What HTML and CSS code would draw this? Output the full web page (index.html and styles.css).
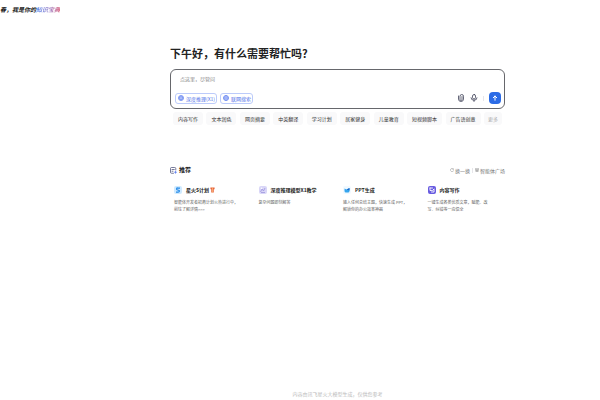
FILE: index.html
```html
<!DOCTYPE html>
<html lang="zh-CN">
<head>
<meta charset="UTF-8" />
<title>知识宝典</title>
<meta name="viewport" content="width=device-width, initial-scale=1" />
<link rel="stylesheet" href="styles.css">
</head>
<body>

<header class="topbar">春，我是你的<span class="brand">知识宝典</span></header>

<main class="main">
  <h1>下午好，有什么需要帮忙吗?</h1>

  <form class="ask">
    <input type="text" class="ask-input" placeholder="点这里，尽管问" aria-label="提问">
    <div class="ask-bar">
      <button type="button" class="mode">
        <svg viewBox="0 0 12 12"><circle cx="6" cy="6" r="5" fill="#dbe3ff" stroke="#5577ee" stroke-width="1.5"/><path d="M6 2.5L9 4.3v3.4L6 9.5 3 7.7V4.3zM3 4.3l3 1.7 3-1.7M6 6v3.5" fill="none" stroke="#5577ee"/></svg>
        深度推理(X1)
      </button>
      <button type="button" class="mode">
        <svg viewBox="0 0 12 12"><circle cx="6" cy="6" r="5" fill="#dbe3ff" stroke="#5577ee" stroke-width="1.5"/><path d="M1 6h10M6 1c-3 3-3 7 0 10M6 1c3 3 3 7 0 10" fill="none" stroke="#5577ee"/></svg>
        联网搜索
      </button>
      <div class="tools">
        <button type="button" class="tool" aria-label="附件">
          <svg viewBox="0 0 16 16" fill="none" stroke="#33364d" stroke-width="1.5" stroke-linecap="round"><path d="M10 5v6a2 2 0 0 1-4 0V4.500a3.500 3.500 0 0 1 7 0V10a5 5 0 0 1-10 0V4"/></svg>
        </button>
        <button type="button" class="tool" aria-label="语音">
          <svg viewBox="0 0 16 16" fill="none" stroke="#33364d" stroke-width="1.5" stroke-linecap="round"><rect x="5" y="1" width="6" height="9" rx="3"/><path d="M2 7.500a6 5 0 0 0 12 0M8 12.500V15"/></svg>
        </button>
        <span class="line"></span>
        <button type="submit" class="send" aria-label="发送">
          <svg viewBox="0 0 12 12" fill="none" stroke="#fff" stroke-width="2" stroke-linecap="round" stroke-linejoin="round"><path d="M6 10.500V2M2.500 5.500L6 2l3.500 3.500"/></svg>
        </button>
      </div>
    </div>
  </form>

  <div class="chips">
    <button type="button">内容写作</button>
    <button type="button">文本润色</button>
    <button type="button">网页摘要</button>
    <button type="button">中英翻译</button>
    <button type="button">学习计划</button>
    <button type="button">居家健身</button>
    <button type="button">儿童教育</button>
    <button type="button">短视频脚本</button>
    <button type="button">广告语创意</button>
    <button type="button" class="more">更多</button>
  </div>

  <section class="recommend">
    <div class="rec-head">
      <svg class="rec-icon" viewBox="0 0 14 14" fill="none" stroke="#4a4f78" stroke-width="1.5" stroke-linecap="round"><path d="M11.500 6V3a2 2 0 0 0-2-2H3a2 2 0 0 0-2 2v7.500a2 2 0 0 0 2 2h4M4 5h4.500M4 8.500h2"/><path d="M11 8.500v4M9 10.500h4" stroke="#5577ee"/></svg>
      <h2>推荐</h2>
      <div class="rec-links">
        <a href="#"><svg viewBox="0 0 10 10" fill="none" stroke="#888" stroke-width="1.200"><path d="M8.500 3A4 4 0 1 0 9 6M8.500 1v2.500H6"/></svg>换一换</a>
        <span class="line"></span>
        <a href="#"><svg viewBox="0 0 10 10" fill="none" stroke="#888" stroke-width="1.200"><path d="M1 1h8v3H1zM2 4v5h6V4M5 4v5M2 6.500h6"/></svg>智能体广场</a>
      </div>
    </div>

    <div class="cards">
      <article class="card">
        <h3>
          <svg viewBox="0 0 16 16"><rect width="16" height="16" rx="4" fill="#cfeaff"/><path d="M12 4H7.500a2 2 0 0 0-.500 4l2.500.500A1.800 1.800 0 0 1 9 12H4" fill="none" stroke="#2389e8" stroke-width="2.500"/></svg>
          <span>星火S计划<svg class="gift" viewBox="0 0 12 14"><path d="M1 1h10v4H1zM3 5h6v8H3z" fill="#e8643c"/><path d="M6 1v12" stroke="#ffd08a" stroke-width="1.500"/></svg></span>
        </h3>
        <p>智能体开发者招募计划火热进行中，<br>前往了解详情&gt;&gt;&gt;</p>
      </article>
      <article class="card">
        <h3>
          <svg viewBox="0 0 16 16"><rect width="16" height="16" rx="4" fill="#d9d6f7"/><path d="M3 12l3-6 3 4 3-6M4 13h8" fill="none" stroke="#9a91dc" stroke-width="1.500"/><circle cx="5" cy="4.500" r="1.500" fill="#fff"/></svg>
          <span>深度推理模型X1教学</span>
        </h3>
        <p>复杂问题即刻解答</p>
      </article>
      <article class="card">
        <h3>
          <svg viewBox="0 0 16 16"><rect width="16" height="16" rx="4" fill="#f1f9ff"/><path d="M3 5l4 2 6-3v6a3 3 0 0 1-3 3H6a3 3 0 0 1-3-3z" fill="#35a5ee"/><path d="M7 7l6-3v5z" fill="#1766c9"/></svg>
          <span>PPT生成</span>
        </h3>
        <p>输入任何总结主题，快速生成 PPT，<br>解锁你的办公效率神器</p>
      </article>
      <article class="card">
        <h3>
          <svg viewBox="0 0 16 16"><rect width="16" height="16" rx="4" fill="#685be0"/><path d="M4 4h5M4 4v5h3M12 7v5H7M9 9l3-3" fill="none" stroke="#fff" stroke-width="1.800" stroke-linecap="round"/></svg>
          <span>内容写作</span>
        </h3>
        <p>一键生成各类优质文章，赋能、改<br>写、纠错等一应俱全</p>
      </article>
    </div>
  </section>
</main>

<footer class="footer">内容由讯飞星火大模型生成，仅供您参考</footer>

</body>
</html>
```
FILE: styles.css
```css
* {
  box-sizing: border-box;
}
body {
  margin: 0;
  min-height: 100vh;
  display: flex;
  flex-direction: column;
  background: #fff;
  color: #222;
  font-family: "Noto Sans CJK SC", sans-serif;
  font-size: 5px;
  line-height: 7px;
}
h1, h2, h3, p {
  margin: 0;
}
button, input {
  font: inherit;
  color: inherit;
  border: none;
  padding: 0;
  background: none;
}
button {
  cursor: pointer;
  white-space: nowrap;
}
svg {
  display: block;
  flex: none;
}
.topbar {
  padding-top: 6px;
  font-size: 6px;
  line-height: 8px;
  font-weight: bold;
  font-style: italic;
}
.brand {
  background: linear-gradient(90deg, #4f83ee, #9a80c8 55%, #d8607c);
  background-clip: text;
  -webkit-background-clip: text;
  color: transparent;
}
.main {
  flex: 1;
  padding: 31px 95px 0 170px;
}
h1 {
  font-size: 11px;
  line-height: 16px;
  font-weight: bold;
}
/* 输入框 */
.ask {
  margin-top: 8px;
  height: 40px;
  padding: 5px 3px 4px 4px;
  display: flex;
  flex-direction: column;
  justify-content: space-between;
  border: 1px solid #66676c;
  border-radius: 6px;
}
.ask-input {
  width: 100%;
  padding: 0 5px;
  height: 7px;
  outline: none;
}
.ask-input::placeholder {
  color: #888;
}
.ask-bar {
  display: flex;
  align-items: center;
  gap: 3px;
}
.mode {
  display: flex;
  align-items: center;
  gap: 2px;
  height: 11px;
  padding: 0 1px 0 2px;
  border: 1px solid #bccbfa;
  border-radius: 3px;
  color: #4d70e8;
}
.mode svg {
  width: 6px;
  height: 6px;
}
.tools {
  margin-left: auto;
  display: flex;
  align-items: center;
  gap: 5px;
}
.tool svg {
  width: 8px;
  height: 8px;
}
.line {
  width: 1px;
  height: 5px;
  background: #e6e6ea;
}
.send {
  display: flex;
  align-items: center;
  justify-content: center;
  width: 12px;
  height: 12px;
  border-radius: 4px;
  background: #2b6be6;
}
.send svg {
  width: 6px;
  height: 6px;
}
.chips {
  display: flex;
  justify-content: space-between;
  margin-top: 3px;
  padding: 0 3px;
}
.chips button {
  height: 13px;
  padding: 0 5px;
  border-radius: 3px;
  background: #f9f9fa;
  color: #333;
}
.chips .more {
  padding: 0 4px;
  color: #aaa;
}
/* 推荐 */
.recommend {
  margin-top: 41px;
}
.rec-head {
  display: flex;
  align-items: center;
  gap: 2px;
}
.rec-icon {
  width: 7px;
  height: 7px;
}
h2 {
  font-size: 6px;
  line-height: 8px;
}
.rec-links {
  margin-left: auto;
  display: flex;
  align-items: center;
  gap: 2px;
}
.rec-links a {
  display: flex;
  align-items: center;
  gap: 1px;
  color: #777;
  text-decoration: none;
}
.rec-links svg {
  width: 4px;
  height: 4px;
}
.cards {
  display: grid;
  grid-template-columns: repeat(4, 1fr);
  gap: 13px;
  margin-top: 12px;
  padding: 0 6px 0 4px;
}
.card h3 {
  display: flex;
  align-items: center;
  gap: 4px;
  font-size: 5px;
  line-height: 8px;
  white-space: nowrap;
}
.card h3 > svg {
  width: 8px;
  height: 8px;
}
.card h3 span {
  display: flex;
  align-items: center;
  gap: 1px;
}
.gift {
  width: 5px;
  height: 6px;
}
.card p {
  margin-top: 5px;
  font-size: 4px;
  color: #666;
  white-space: nowrap;
}
.footer {
  padding: 0 0 3px 75px;
  text-align: center;
  color: #bbb;
}
```
